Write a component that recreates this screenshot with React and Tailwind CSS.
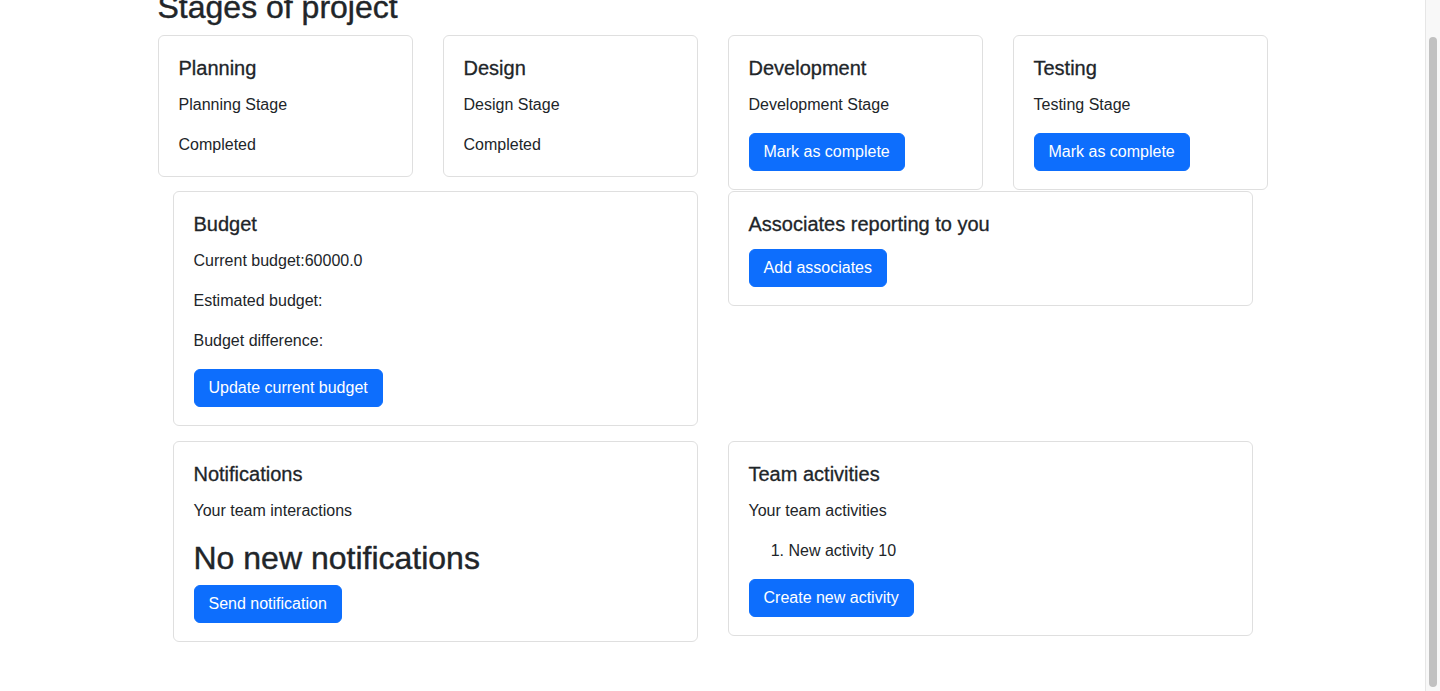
import React from 'react';

const stages = [
  { title: 'Planning', text: 'Planning Stage', done: true },
  { title: 'Design', text: 'Design Stage', done: true },
  { title: 'Development', text: 'Development Stage', done: false },
  { title: 'Testing', text: 'Testing Stage', done: false },
];

const Card = ({ children }) => (
  <div className="bg-white border border-[#dfdfdf] rounded-md px-[20px] pt-[20px] pb-[18px]">{children}</div>
);

const Title = ({ children }) => (
  <h5 className="text-[20px] leading-[24px] font-medium [-webkit-text-stroke:0.3px] mb-[13px]">{children}</h5>
);

const Button = ({ children }) => (
  <button className="bg-[#0d6efd] border border-[#0d6efd] text-white text-base leading-6 px-[14px] py-[6px] rounded-md">
    {children}
  </button>
);

const App = () => {
  return (
    <div className="flex h-[691px] overflow-hidden bg-white text-[#212529] font-['Liberation_Sans',Arial,sans-serif]">
      <main className="flex-1">
        <div className="mt-[-12px]">
          <div className="w-[1110px] mx-auto">
            <h2 className="text-[32px] leading-[38px] font-medium [-webkit-text-stroke:0.4px] mb-[9px]">
              Stages of project
            </h2>

            {/* etapas project */}
            <div className="grid grid-cols-4 gap-[30px] items-start">
              {stages.map((s) => (
                <Card key={s.title}>
                  <Title>{s.title}</Title>
                  <p className="leading-6 mb-4">{s.text}</p>
                  {s.done ? <p className="leading-6 pb-[1px]">Completed</p> : <Button>Mark as complete</Button>}
                </Card>
              ))}
            </div>
          </div>

          <div className="w-[1080px] mx-auto mt-[1px] grid grid-cols-2 gap-x-[30px] items-start">
            <Card>
              <Title>Budget</Title>
              <p className="leading-6 mb-4">Current budget:60000.0</p>
              <p className="leading-6 mb-4">Estimated budget:</p>
              <p className="leading-6 mb-4">Budget difference:</p>
              <Button>Update current budget</Button>
            </Card>
            <Card>
              <Title>Associates reporting to you</Title>
              <Button>Add associates</Button>
            </Card>
          </div>

          <div className="w-[1080px] mx-auto mt-[15px] grid grid-cols-2 gap-x-[30px] items-start">
            <Card>
              <Title>Notifications</Title>
              <p className="leading-6 mb-4">Your team interactions</p>
              <h2 className="text-[32px] leading-[38.4px] font-medium [-webkit-text-stroke:0.4px] mb-2">
                No new notifications
              </h2>
              <Button>Send notification</Button>
            </Card>
            <Card>
              <Title>Team activities</Title>
              <p className="leading-6 mb-4">Your team activities</p>
              <ol className="list-decimal pl-10 mb-4">
                <li className="leading-6">New activity 10</li>
              </ol>
              <Button>Create new activity</Button>
            </Card>
          </div>
        </div>
      </main>

      {/* scrollbar */}
      <div className="w-[15px] h-full bg-[#f8f8f8] border-l border-[#e6e6e6] pt-[37px] pb-[4px] px-[3px]">
        <div className="h-full w-[8px] rounded-full bg-[#c1c1c1]" />
      </div>
    </div>
  );
};

export default App;
